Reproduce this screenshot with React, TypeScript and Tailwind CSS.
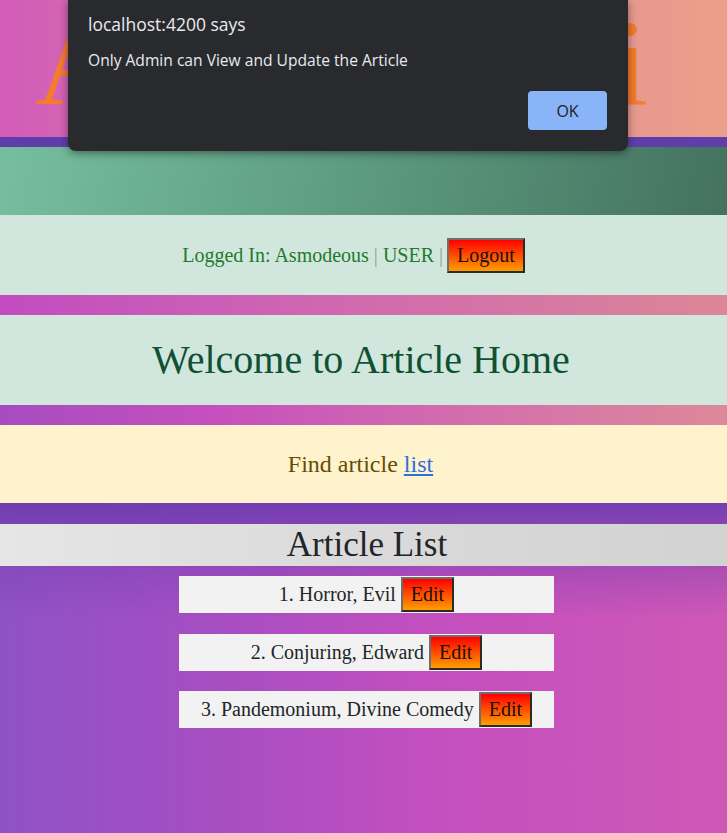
import React from "react";

const serif = { fontFamily: '"Liberation Serif", "Times New Roman", serif' };

function GradButton({ children }: { children: React.ReactNode }) {
  return (
    <button
      className="h-[35px] px-[8px] text-[20px] leading-[23px] text-[#1a0f0f] bg-[linear-gradient(to_bottom,#ff0000,#ff9d00)] border-2 border-solid border-t-[#6e6e6e] border-l-[#6e6e6e] border-r-[#2b2b22] border-b-[#2b2b22]"
      style={serif}
    >
      {children}
    </button>
  );
}

const articles = [
  "1. Horror, Evil",
  "2. Conjuring, Edward",
  "3. Pandemonium, Divine Comedy",
];

export default function App() {
  return (
    <div className="relative min-h-screen w-full flex flex-col overflow-hidden" style={serif}>
      {/* header */}
      <header className="h-[147px] shrink-0 border-b-[10px] border-[#5f3eab] bg-[linear-gradient(to_right,#d25cb8,#e29296_70%,#eb9f89)] flex justify-center pr-[43px]">
        <h1 className="text-[122px] leading-[126px] tracking-[0.6px] text-[#f57b2e] whitespace-nowrap">Article Wiki</h1>
      </header>

      {/* green band */}
      <div className="h-[68px] shrink-0 bg-[linear-gradient(100deg,#76be9e,#5f9e82_45%,#44725f)]" />

      {/* logged in */}
      <div className="h-[80px] shrink-0 bg-[#d1e7dd] flex items-center justify-center pr-[20px] text-[20px] leading-[23px] text-[#1f7a2e]">
        <span>Logged In: Asmodeous</span>
        <span className="text-[#84a694] mx-[5px]">|</span>
        <span>USER</span>
        <span className="text-[#84a694] ml-[5px] mr-[4px]">|</span>
        <GradButton>Logout</GradButton>
      </div>

      {/* welcome */}
      <div className="shrink-0 pt-[20px] bg-[linear-gradient(to_right,#c24cc0,#cd62b4_35%,#dc8698)]">
        <div className="h-[90px] bg-[#d1e7dd] flex items-center justify-center pr-[5px]">
          <h2 className="text-[40px] leading-[46px] text-[#0f5132]">Welcome to Article Home</h2>
        </div>
      </div>

      {/* find */}
      <div className="shrink-0 pt-[20px] bg-[linear-gradient(to_right,#a64cc0,#c650bd_30%,#d36fac_65%,#dd889a)]">
        <div className="h-[78px] bg-[#fff3cd] flex items-center justify-center pr-[6px] text-[24px] leading-[28px] text-[#664d03]">
          <span>
            Find article{" "}
            <a href="#" className="text-[#2f6ee0] underline">
              list
            </a>
          </span>
        </div>
      </div>

      {/* article list */}
      <div className="flex-1 flex flex-col pt-[21px] bg-[linear-gradient(to_bottom,rgba(110,60,176,0.95)_0%,rgba(120,64,176,0.6)_12%,rgba(120,64,176,0)_35%),linear-gradient(to_right,#8f52c6_0%,#a64ec2_30%,#c44fbf_60%,#cf58b6_100%)]">
        <div className="h-[42px] shrink-0 bg-[linear-gradient(to_right,#e6e6e6,#dadada_50%,#d2d2d2)] flex items-center justify-center pl-[7px]">
          <h3 className="text-[35px] leading-[40px] text-[#212529]">Article List</h3>
        </div>
        <ul className="flex flex-col items-center gap-[20.5px] pt-[10px] pl-[6px]">
          {articles.map((a) => (
            <li
              key={a}
              className="w-[375px] h-[37px] bg-[#f2f2f2] flex items-center justify-center gap-[5px] text-[20px] leading-[23px] text-[#212529]"
            >
              <span>{a}</span>
              <GradButton>Edit</GradButton>
            </li>
          ))}
        </ul>
      </div>

      {/* alert dialog */}
      <div
        className="absolute left-[68px] top-0 w-[560px] h-[151px] bg-[#292a2d] rounded-b-[8px] shadow-[0_2px_8px_rgba(0,0,0,0.45)] pl-[20px] pr-[21px] flex flex-col"
        style={{ fontFamily: '"Open Sans", "Noto Sans", sans-serif' }}
      >
        <div className="pt-[12px] text-[17.5px] leading-[24px] text-[#e8eaed]">localhost:4200 says</div>
        <div className="pt-[14px] text-[15.6px] leading-[20px] text-[#e8eaed]">
          Only Admin can View and Update the Article
        </div>
        <div className="flex justify-end pt-[21px]">
          <button className="w-[79px] h-[39px] rounded-[4px] bg-[#8ab4f8] text-[16px] text-[#202124]">
            OK
          </button>
        </div>
      </div>
    </div>
  );
}
